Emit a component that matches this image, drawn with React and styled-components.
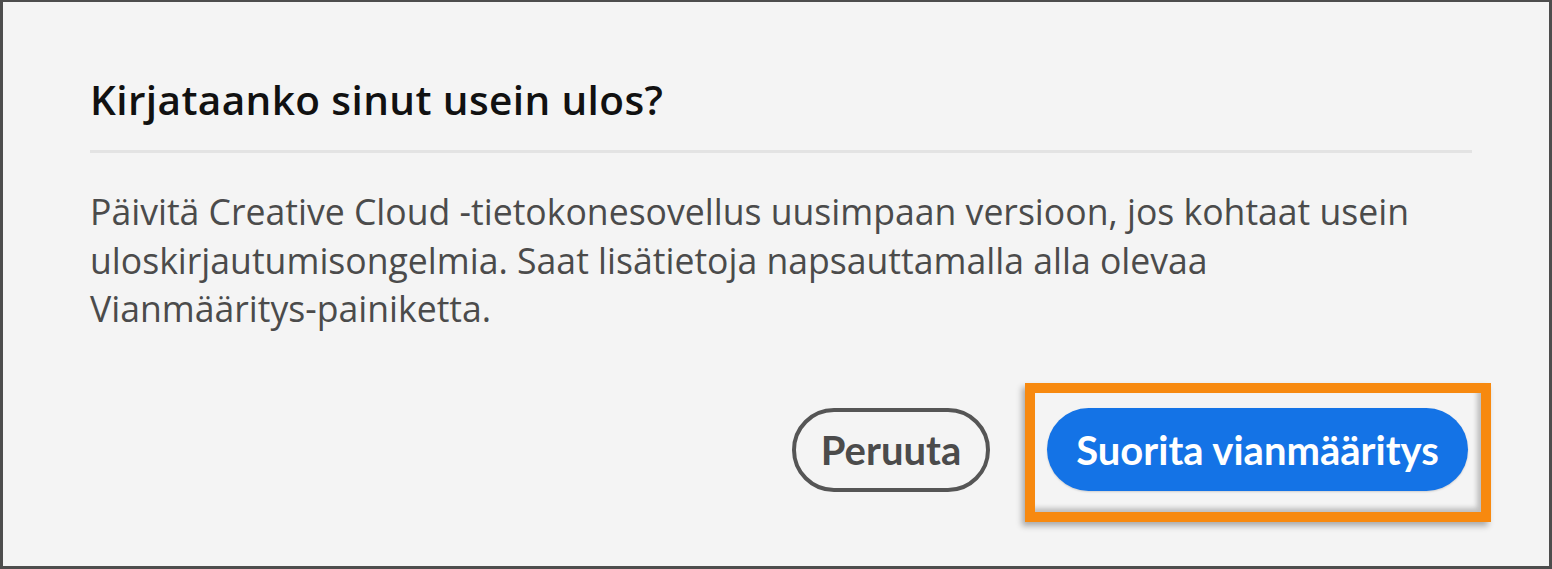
import React from "react";
import styled, { createGlobalStyle } from "styled-components";

const Global = createGlobalStyle`
  html, body { margin: 0; padding: 0; background: #f4f4f4; }
  * { box-sizing: border-box; }
`;

const Frame = styled.div`
  width: 1552px;
  height: 569px;
  background: #f4f4f4;
  border: 3px solid #4d4d4d;
  border-top-width: 2px;
  padding: 0 77px 0 87px;
  display: flex;
  flex-direction: column;
  font-family: "Open Sans", "Noto Sans", sans-serif;
`;

const Title = styled.h1`
  margin: 74px 0 0;
  font-size: 40.5px;
  font-weight: 600;
  color: #111;
  line-height: 48px;
  letter-spacing: 0.4px;
`;

const Divider = styled.hr`
  margin: 26px 0 0;
  border: 0;
  height: 3px;
  background: #e3e3e3;
`;

const Body = styled.p`
  margin: 34px 0 0;
  font-size: 35.6px;
  line-height: 48.5px;
  color: #4b4b4b;
  max-width: 1350px;
`;

const Footer = styled.div`
  margin-top: auto;
  margin-bottom: 44px;
  margin-right: -19px;
  display: flex;
  justify-content: flex-end;
  align-items: flex-start;
  gap: 35px;
`;

const Button = styled.button`
  height: 84px;
  border-radius: 42px;
  font-family: "Lato", "Open Sans", sans-serif;
  font-weight: 700;
  font-size: 40px;
  letter-spacing: 0;
  padding: 0;
  border: ${(p) => (p.$primary ? "none" : "4px solid #555")};
  background: ${(p) => (p.$primary ? "#1473e6" : "#f4f4f4")};
  color: ${(p) => (p.$primary ? "#fff" : "#4b4b4b")};
  cursor: pointer;
`;

const SecondaryButton = styled(Button)`
  margin-top: 25px;
  width: 198px;
`;

const Highlight = styled.div`
  border: 10px solid #f7890f;
  padding: 15px 13px 21px 12px;
  box-shadow: -3px 4px 6px rgba(0, 0, 0, 0.3),
    inset -4px -4px 5px rgba(0, 0, 0, 0.22);
  background: #f4f4f4;
`;

const PrimaryButton = styled(Button)`
  width: 421px;
  height: 83px;
  box-shadow: 0 1px 2px rgba(0, 0, 0, 0.15);
`;

export default function App() {
  return (
    <>
      <Global />
      <Frame>
        <Title>Kirjataanko sinut usein ulos?</Title>
        <Divider />
        <Body>
          Päivitä Creative Cloud -tietokonesovellus uusimpaan versioon, jos kohtaat usein
          uloskirjautumisongelmia. Saat lisätietoja napsauttamalla alla olevaa
          Vianmääritys-painiketta.
        </Body>
        <Footer>
          <SecondaryButton>Peruuta</SecondaryButton>
          <Highlight>
            <PrimaryButton $primary>Suorita vianmääritys</PrimaryButton>
          </Highlight>
        </Footer>
      </Frame>
    </>
  );
}
